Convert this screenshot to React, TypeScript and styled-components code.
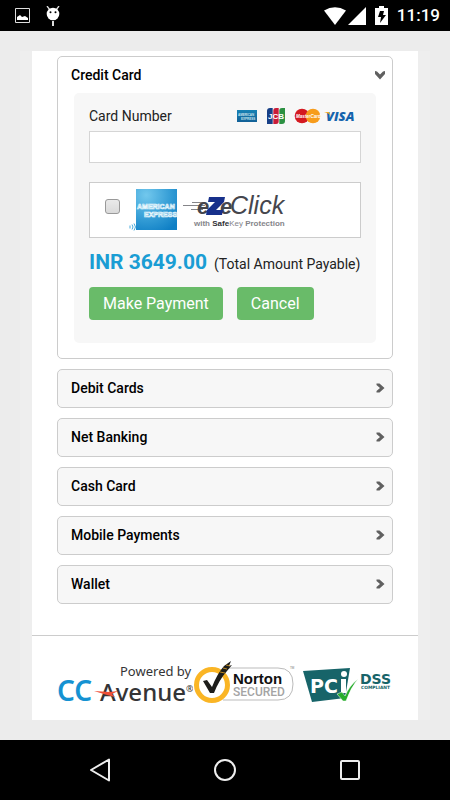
import React, { useState } from "react";
import styled, { createGlobalStyle } from "styled-components";

const GlobalStyle = createGlobalStyle`
  * { box-sizing: border-box; }
  body {
    margin: 0;
    background: #ececec;
    font-family: Roboto, "Liberation Sans", sans-serif;
    color: #222;
  }
  button, input { font-family: inherit; }
`;

const Screen = styled.div`
  min-height: 100vh;
  display: flex;
  flex-direction: column;
`;

const StatusBar = styled.header`
  height: 31px;
  padding: 0 10px 0 14px;
  background: #000;
  color: #fff;
  display: flex;
  align-items: center;
  justify-content: space-between;
`;

const StatusGroup = styled.div<{ $gap: number }>`
  display: flex;
  align-items: center;
  gap: ${(p) => p.$gap}px;
`;

const Clock = styled.time`
  font-size: 17px;
  font-weight: 500;
  line-height: 31px;
`;

const Backdrop = styled.main`
  flex: 1;
  margin: 20px 20px;
  padding: 0 12px;
  background: #eee;
  display: flex;
  flex-direction: column;
`;

const Sheet = styled.div`
  flex: 1;
  background: #fff;
  display: flex;
  flex-direction: column;
`;

const Options = styled.div`
  flex: 1;
  padding: 5px 25px 31px;
  display: flex;
  flex-direction: column;
  gap: 10px;
`;

const Option = styled.section<{ $open?: boolean }>`
  border: 1px solid #ccc;
  border-radius: 5px;
  background: ${(p) => (p.$open ? "#fff" : "#f7f7f7")};
`;

const OptionHeader = styled.button<{ $open?: boolean }>`
  width: 100%;
  height: ${(p) => (p.$open ? 36 : 37)}px;
  padding: 0 7px 1px 13px;
  border: 0;
  background: none;
  color: #000;
  display: flex;
  align-items: center;
  justify-content: space-between;
  font-size: 14px;
  font-weight: 500;
  text-align: left;
  cursor: pointer;
`;

const PaymentForm = styled.form`
  margin: 0 16px 15px;
  padding: 12px 15px 23px;
  border-radius: 5px;
  background: #f7f7f7;
`;

const FieldHeader = styled.div`
  height: 22px;
  margin-bottom: 4px;
  padding-right: 5px;
  display: flex;
  align-items: center;
  justify-content: space-between;
`;

const FieldLabel = styled.label`
  font-size: 14px;
`;

const CardInput = styled.input`
  display: block;
  width: 100%;
  height: 32px;
  padding: 0 8px;
  border: 1px solid #d5d5d5;
  border-radius: 0;
  background: #fff;
  font-size: 14px;
`;

const EzeClick = styled.label`
  height: 56px;
  margin-top: 19px;
  padding: 0 15px;
  border: 1px solid #ccc;
  background: #fff;
  display: flex;
  align-items: center;
  gap: 8px;
`;

const Checkbox = styled.input`
  appearance: none;
  width: 15px;
  height: 15px;
  margin: 0 0 8px;
  border: 1px solid #999;
  border-radius: 3px;
  background: linear-gradient(#eaeaea, #dadada);
  &:checked { background: #1a9ad6; }
`;

const Total = styled.p`
  margin: 8px 0;
  height: 33px;
  display: flex;
  align-items: baseline;
  gap: 7px;
  line-height: 33px;
  white-space: nowrap;
  font-size: 14px;
`;

const Amount = styled.strong`
  color: #1a9dd4;
  font-size: 21px;
  font-weight: 700;
`;

const Actions = styled.div`
  display: flex;
  gap: 14px;
`;

const ActionButton = styled.button`
  height: 33px;
  padding: 0 14px;
  border: 0;
  border-radius: 4px;
  background: #69bb69;
  color: #fff;
  font-size: 16px;
`;

const TrustFooter = styled.footer`
  height: 85px;
  border-top: 1px solid #ccc;
  padding: 24px 25px 0;
  display: flex;
  justify-content: space-between;
  align-items: flex-start;
`;

const SellerLogos = styled.div`
  display: flex;
`;

const NavBar = styled.nav`
  height: 60px;
  padding: 0 84px;
  background: #000;
  display: flex;
  align-items: center;
  justify-content: space-between;
`;

const NavButton = styled.button`
  width: 32px;
  height: 32px;
  padding: 0;
  border: 0;
  background: none;
  display: grid;
  place-items: center;
`;

const Logo = styled.svg`
  display: block;
  flex: none;
`;

const PictureIcon = () => (
  <Logo width="17" height="17" viewBox="0 0 17 17">
    <path d="M1.5 1.5h14v14h-14z" fill="none" stroke="#ddd" strokeWidth="1" />
    <path d="M3 13V10l3-2 2 2 3-1 3 2v2z" fill="#fff" />
  </Logo>
);

const DebugIcon = () => (
  <Logo width="14" height="20" viewBox="0 0 14 20">
    <path d="M1 0l3 4M13 0l-3 4" stroke="#ddd" strokeWidth="1.3" />
    <circle cx="7" cy="8" r="6.3" fill="#fff" />
    <circle cx="4.5" cy="6.3" r="1" />
    <circle cx="9.5" cy="6.3" r="1" />
    <path d="M6 15h2v5H6z" fill="#ddd" />
  </Logo>
);

const WifiIcon = () => (
  <Logo width="22" height="18" viewBox="0 0 22 18">
    <path d="M0 3.5Q11-3 22 3.5L11 18z" fill="#fff" />
  </Logo>
);

const SignalIcon = () => (
  <Logo width="18" height="18" viewBox="0 0 18 18">
    <path d="M18 0v18H0z" fill="#fff" />
  </Logo>
);

const BatteryIcon = () => (
  <Logo width="13" height="19" viewBox="0 0 13 19">
    <path d="M4 0h5v2h4v17H0V2h4z" fill="#fff" />
    <path d="M5 5h4L8 9h3l-6 8 1-6H3z" fill="#000" />
  </Logo>
);

const Chevron = ({ open }: { open?: boolean }) => (
  <Logo width="10" height="10" viewBox="0 0 10 10" aria-hidden="true">
    <path
      d={open ? "M0 1l2 .5 3 3 3-3 2-.5v3L5 9.500 0 4z" : "M1.500 .5h3L9.500 5l-5 4.500h-3V8L5 5 1.500 2z"}
      fill="#606060"
    />
  </Logo>
);

const CardLogos = () => (
  <Logo width="119" height="18" viewBox="0 0 119 18" role="img" aria-label="American Express, JCB, MasterCard, Visa">
    <defs>
      <linearGradient id="amexSmall" x2="0" y2="1">
        <stop stopColor="#1782b5" />
        <stop offset="1" stopColor="#126097" />
      </linearGradient>
    </defs>
    <rect y="3" width="20" height="12" fill="url(#amexSmall)" />
    <g fill="#c9e4ef" fontFamily="Liberation Sans, sans-serif" fontWeight="bold" fontSize="3">
      <text x="1" y="9">AMERICAN</text>
      <text x="4" y="13">EXPRESS</text>
    </g>
    <path d="M33 1h3v16h-6V4q0-3 3-3z" fill="#173f86" />
    <path d="M39 1h3v13q0 3-3 3h-3V4q0-3 3-3z" fill="#c91c38" />
    <path d="M45 1h3v13q0 3-3 3h-3V4q0-3 3-3z" fill="#2c9142" />
    <path d="M36 1v16M42 1v16" stroke="#fff" strokeWidth=".6" />
    <text x="31" y="12" fill="#fff" fontFamily="Liberation Sans, sans-serif" fontWeight="bold" fontSize="8">JCB</text>
    <circle cx="65" cy="9" r="7.3" fill="#d41920" />
    <circle cx="76" cy="9" r="7.3" fill="#f79c1b" />
    <text x="59" y="11" fill="#fff" fontFamily="Liberation Sans, sans-serif" fontWeight="bold" fontStyle="italic" fontSize="4.5">MasterCard</text>
    <text x="89" y="14" fill="#1463ad" fontFamily="Open Sans, sans-serif" fontWeight="800" fontStyle="italic" fontSize="13">VISA</text>
    <path d="M87 5h5l2 4q-2-3-7-4z" fill="#f2ac24" />
  </Logo>
);

const EzeClickLogo = () => (
  <Logo width="162" height="46" viewBox="0 0 162 46" role="img" aria-label="American Express ezeClick with SafeKey Protection">
    <defs>
      <radialGradient id="amexLarge" cx=".25" cy=".15" r="1">
        <stop stopColor="#72c8ed" />
        <stop offset=".6" stopColor="#339cd5" />
        <stop offset="1" stopColor="#0f7fc5" />
      </radialGradient>
    </defs>
    <rect x="8" y="2" width="41" height="41" fill="url(#amexLarge)" />
    <g fill="none" stroke="#e9f7fc" strokeWidth=".7" fontFamily="Liberation Sans, sans-serif" fontWeight="bold" fontSize="7">
      <text x="9" y="22">AMERICAN</text>
      <text x="16" y="30">EXPRESS</text>
    </g>
    <path d="M2 38.500v3M4 37.500q2 2.500 0 5M6 36.500q3 3.500 0 7" fill="none" stroke="#49aadb" />
    <path d="M55 18.500h22M64 15.500h12M63 22.500h12" stroke="#858589" strokeWidth="1.2" />
    <g fontFamily="Liberation Sans, sans-serif" fontStyle="italic" fill="#45464d">
      <text x="69" y="27" fontSize="22" fontWeight="bold">e</text>
      <text x="92" y="27" fontSize="22" fontWeight="bold">e</text>
      <text x="102" y="27" fontSize="25">Click</text>
      <path d="M81 10h16l-1 5-8 8h7l-1 5H78l1-5 8-8h-7z" fill="#17308b" />
    </g>
    <text x="66" y="39" fontFamily="Liberation Sans, sans-serif" fontSize="8" fontWeight="bold" fill="#85858a">
      with <tspan fill="#303035">Safe</tspan><tspan fontWeight="normal">Key</tspan> Protection
    </text>
  </Logo>
);

const CcAvenueLogo = () => (
  <Logo width="136" height="52" viewBox="0 0 136 52" role="img" aria-label="Powered by CCAvenue">
    <g fontFamily="Noto Sans, sans-serif" fill="#343436">
      <text x="63" y="16" fontSize="13">Powered by</text>
      <text x="0" y="41" fontSize="28" fontWeight="600" fill="#1592d2">CC</text>
      <text x="43" y="41" fontSize="24" fontWeight="500">Avenue</text>
      <text x="129" y="32" fontSize="9">®</text>
    </g>
    <path d="M37 31l16 1 8-1-6 3 3 3-8-2z" fill="#ee5037" />
  </Logo>
);

const NortonLogo = () => (
  <Logo width="102" height="44" viewBox="0 0 102 44" role="img" aria-label="Norton Secured">
    <path d="M30 8h55q15 0 15 16t-15 16H30" fill="#fff" stroke="#bbb" />
    <circle cx="19" cy="25" r="15.500" fill="#fff" stroke="#fab525" strokeWidth="5" />
    <path d="M10 21l4-1 5 7Q24 14 31 6l7-5-2 5 3-1-5 6Q26 20 21 33h-4z" fill="#1d1d1b" />
    <path d="M27 12l5 1M30 8l4 1M33 5l4 1" stroke="#fab525" strokeWidth=".7" />
    <text x="40" y="24" fontFamily="Liberation Sans, sans-serif" fontSize="15" fontWeight="bold" fill="#111">Norton</text>
    <text x="40" y="36" fontFamily="Roboto, sans-serif" fontSize="12" fontWeight="500" fill="#a4a4a4">SECURED</text>
    <text x="97" y="9" fontFamily="Liberation Sans, sans-serif" fontSize="3" fill="#777">TM</text>
  </Logo>
);

const PciLogo = () => (
  <Logo width="90" height="44" viewBox="0 0 90 44" role="img" aria-label="PCI DSS Compliant">
    <path d="M0 11l47-3-5 30-33 4z" fill="#176469" />
    <g fontFamily="DejaVu Sans, sans-serif" fontWeight="bold">
      <text x="7" y="33" fontSize="19" fill="#fff">PC</text>
      <path d="M38 19h5v14h-5z" fill="#fff" />
      <circle cx="41" cy="14" r="3" fill="#fff" />
      <text x="57" y="24" fontSize="14" fill="#176469">DSS</text>
      <text x="58" y="29" fontSize="4.4" fill="#176469">COMPLIANT</text>
    </g>
    <path d="M34 34l5-2 3 4q4-10 13-17-7 8-12 22h-3z" fill="#27ad2c" stroke="#fff" strokeWidth=".5" />
  </Logo>
);

const collapsedOptions = ["Debit Cards", "Net Banking", "Cash Card", "Mobile Payments", "Wallet"];

export default function App() {
  const [cardNumber, setCardNumber] = useState("");

  return (
    <Screen>
      <GlobalStyle />
      <StatusBar>
        <StatusGroup $gap={15}>
          <PictureIcon />
          <DebugIcon />
        </StatusGroup>
        <StatusGroup $gap={9}>
          <StatusGroup $gap={2}>
            <WifiIcon />
            <SignalIcon />
          </StatusGroup>
          <BatteryIcon />
          <Clock>11:19</Clock>
        </StatusGroup>
      </StatusBar>

      <Backdrop>
        <Sheet>
          <Options>
            <Option $open>
              <OptionHeader $open type="button" aria-expanded="true">
                Credit Card
                <Chevron open />
              </OptionHeader>
              <PaymentForm onSubmit={(e) => e.preventDefault()}>
                <FieldHeader>
                  <FieldLabel htmlFor="card-number">Card Number</FieldLabel>
                  <CardLogos />
                </FieldHeader>
                <CardInput
                  id="card-number"
                  inputMode="numeric"
                  value={cardNumber}
                  onChange={(e) => setCardNumber(e.target.value)}
                />
                <EzeClick>
                  <Checkbox type="checkbox" />
                  <EzeClickLogo />
                </EzeClick>
                <Total>
                  <Amount>INR 3649.00</Amount>
                  <span>(Total Amount Payable)</span>
                </Total>
                <Actions>
                  <ActionButton type="submit">Make Payment</ActionButton>
                  <ActionButton type="button">Cancel</ActionButton>
                </Actions>
              </PaymentForm>
            </Option>
            {collapsedOptions.map((name) => (
              <Option key={name}>
                <OptionHeader type="button" aria-expanded="false">
                  {name}
                  <Chevron />
                </OptionHeader>
              </Option>
            ))}
          </Options>
          <TrustFooter>
            <SellerLogos>
              <CcAvenueLogo />
              <NortonLogo />
            </SellerLogos>
            <PciLogo />
          </TrustFooter>
        </Sheet>
      </Backdrop>

      <NavBar>
        <NavButton aria-label="Back">
          <Logo width="24" height="26" viewBox="0 0 24 26">
            <path d="M21 2.500v21L3 13z" fill="none" stroke="#eee" strokeWidth="2" strokeLinejoin="round" />
          </Logo>
        </NavButton>
        <NavButton aria-label="Home">
          <Logo width="22" height="22" viewBox="0 0 22 22">
            <circle cx="11" cy="11" r="10" fill="none" stroke="#eee" strokeWidth="2" />
          </Logo>
        </NavButton>
        <NavButton aria-label="Recent apps">
          <Logo width="20" height="20" viewBox="0 0 20 20">
            <rect x="1" y="1" width="18" height="18" rx="1" fill="none" stroke="#eee" strokeWidth="2" />
          </Logo>
        </NavButton>
      </NavBar>
    </Screen>
  );
}
